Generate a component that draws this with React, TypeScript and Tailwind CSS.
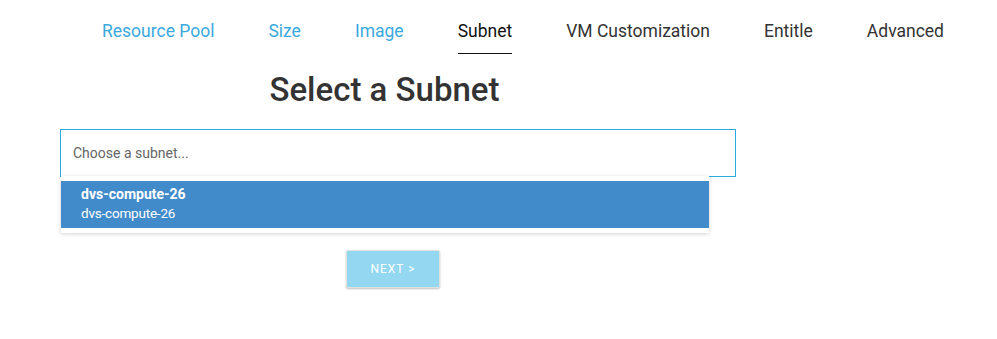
import React from 'react';

const STEPS = [
  { label: 'Resource Pool', state: 'done' },
  { label: 'Size', state: 'done' },
  { label: 'Image', state: 'done' },
  { label: 'Subnet', state: 'active' },
  { label: 'VM Customization', state: 'todo' },
  { label: 'Entitle', state: 'todo' },
  { label: 'Advanced', state: 'todo' },
];

const App: React.FC = () => {
  return (
    <div className="w-[997px] h-[339px] bg-white font-['Roboto',sans-serif] overflow-hidden">
      {/* Wizard steps */}
      <nav className="flex pl-[75px] pt-[19px]">
        {STEPS.map((step) => (
          <div key={step.label} className="px-[27px]">
            <div
              className={`text-[17.5px] leading-[24px] pb-[10px] ${
                step.state === 'done'
                  ? 'text-[#3aa9e0]'
                  : step.state === 'active'
                    ? 'text-[#111] border-b-[1.5px] border-[#111]'
                    : 'text-[#333]'
              }`}
            >
              {step.label}
            </div>
          </div>
        ))}
      </nav>

      {/* Subnet picker */}
      <div className="pl-[60px] pt-[14px]">
        <div className="w-[649px]">
          <h1 className="text-center text-[33px] leading-[44px] font-medium text-[#333]">Select a Subnet</h1>
          <div className="mt-[17px] w-[676px] h-[48px] border border-[#29abe2] flex items-center px-[12px]">
            <span className="text-[14px] text-[#666]">Choose a subnet...</span>
          </div>
          <div className="-mt-px ml-px w-[648px] bg-white py-[5px] shadow-[0_1px_4px_rgba(0,0,0,0.18)]">
            <div className="bg-[#418bca] text-white pl-[20px] pt-[4px] pb-[5px]">
              <div className="text-[14px] leading-[18px] font-bold">dvs-compute-26</div>
              <div className="text-[13.5px] leading-[20px] tracking-[-0.2px]">dvs-compute-26</div>
            </div>
          </div>
          <button className="mt-[17px] ml-[286px] w-[94px] h-[38px] bg-[#93d7f1] rounded-[2px] text-white text-[12px] tracking-[1px] shadow-[0_1px_2px_rgba(0,0,0,0.25)] border border-[#e0e0e0]">
            NEXT &gt;
          </button>
        </div>
      </div>
    </div>
  );
};

export default App;
